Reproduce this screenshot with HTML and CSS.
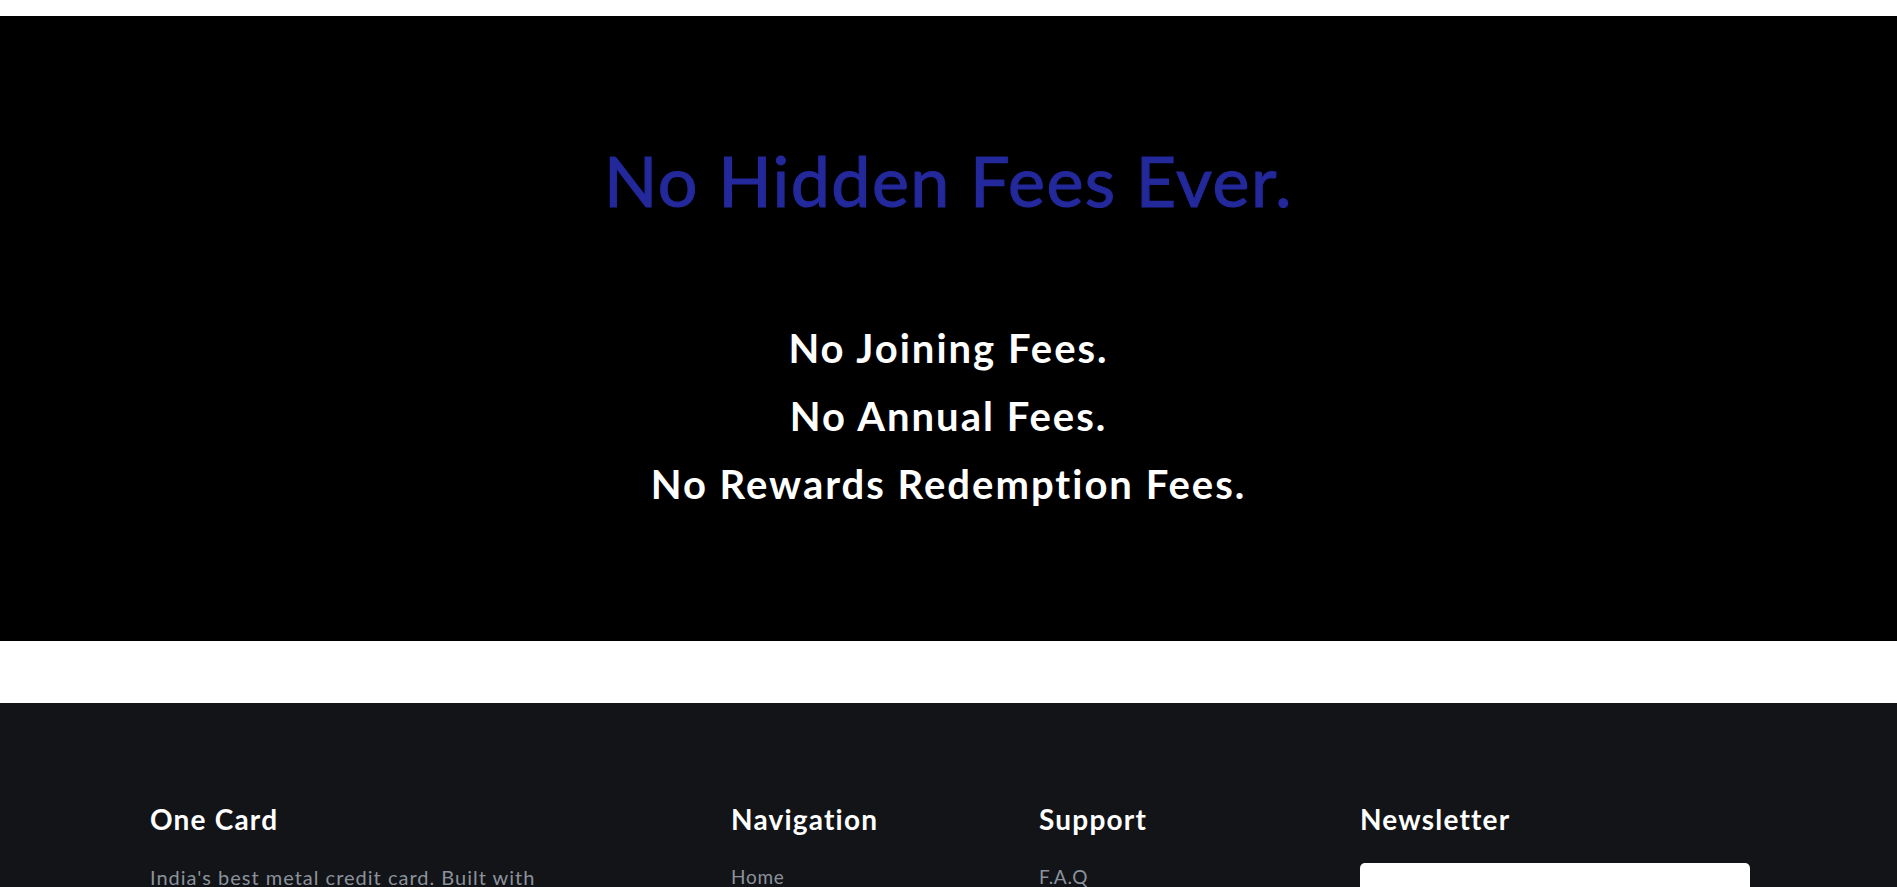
FILE: index.html
```html
<!DOCTYPE html>
<html lang="en">
<head>
<meta charset="utf-8">
<title>One Card - No Hidden Fees</title>
<link rel="stylesheet" href="styles.css">
</head>
<body>
<div class="topspace"></div>
<section class="hero">
  <h1 class="hero-title">No Hidden Fees Ever.</h1>
  <div class="hero-list">
    <p class="hero-item">No Joining Fees.</p>
    <p class="hero-item">No Annual Fees.</p>
    <p class="hero-item">No Rewards Redemption Fees.</p>
  </div>
</section>
<div class="spacer"></div>
<footer class="footer">
  <div class="footer-grid">
    <div class="footer-col">
      <h3 class="footer-heading">One Card</h3>
      <p class="footer-text">India's best metal credit card. Built with precision, for the chosen few.</p>
    </div>
    <div class="footer-col">
      <h3 class="footer-heading">Navigation</h3>
      <ul class="footer-links">
        <li><a href="#">Home</a></li>
        <li><a href="#">About</a></li>
        <li><a href="#">Features</a></li>
      </ul>
    </div>
    <div class="footer-col">
      <h3 class="footer-heading">Support</h3>
      <ul class="footer-links">
        <li><a href="#">F.A.Q</a></li>
        <li><a href="#">Contact</a></li>
        <li><a href="#">Privacy</a></li>
      </ul>
    </div>
    <div class="footer-col">
      <h3 class="footer-heading">Newsletter</h3>
      <input class="news-input" type="email" aria-label="Email">
    </div>
  </div>
</footer>
</body>
</html>
```

FILE: styles.css
```css
* { box-sizing: border-box; }
html, body { margin: 0; padding: 0; }
body {
  font-family: "Lato", "Open Sans", sans-serif;
  background: #ffffff;
}
.topspace { height: 16px; background: #ffffff; }
.hero {
  background: #000000;
  text-align: center;
  padding: 122px 0 123px;
}
.hero-title {
  margin: 0;
  font-size: 70px;
  line-height: 84px;
  font-weight: 400;
  letter-spacing: 1.4px;
  color: #23289b;
  -webkit-text-stroke: 1.2px #23289b;
}
.hero-list { margin-top: 92px; }
.hero-item {
  margin: 0;
  font-size: 40px;
  line-height: 68px;
  font-weight: 700;
  letter-spacing: 2px;
  color: #ffffff;
}
.spacer { height: 62px; background: #ffffff; }
.footer {
  background: #131417;
  padding: 99px 0 60px 150px;
}
.footer-grid {
  display: grid;
  grid-template-columns: 581px 308px 321px 390px;
}
.footer-heading {
  margin: 0;
  font-size: 28px;
  line-height: 34px;
  font-weight: 700;
  letter-spacing: 1.2px;
  color: #ffffff;
}
.footer-text {
  margin: 27px 0 0;
  max-width: 440px;
  font-size: 20px;
  line-height: 28px;
  letter-spacing: 1px;
  color: #8b929c;
}
.footer-links {
  list-style: none;
  margin: 27px 0 0;
  padding: 0;
}
.footer-links li { font-size: 19px; line-height: 28px; letter-spacing: 0.7px; }
.footer-links a { color: #8b929c; text-decoration: none; }
.news-input {
  display: block;
  margin-top: 27px;
  width: 390px;
  height: 48px;
  border: 0;
  border-radius: 5px;
  background: #ffffff;
}
```
